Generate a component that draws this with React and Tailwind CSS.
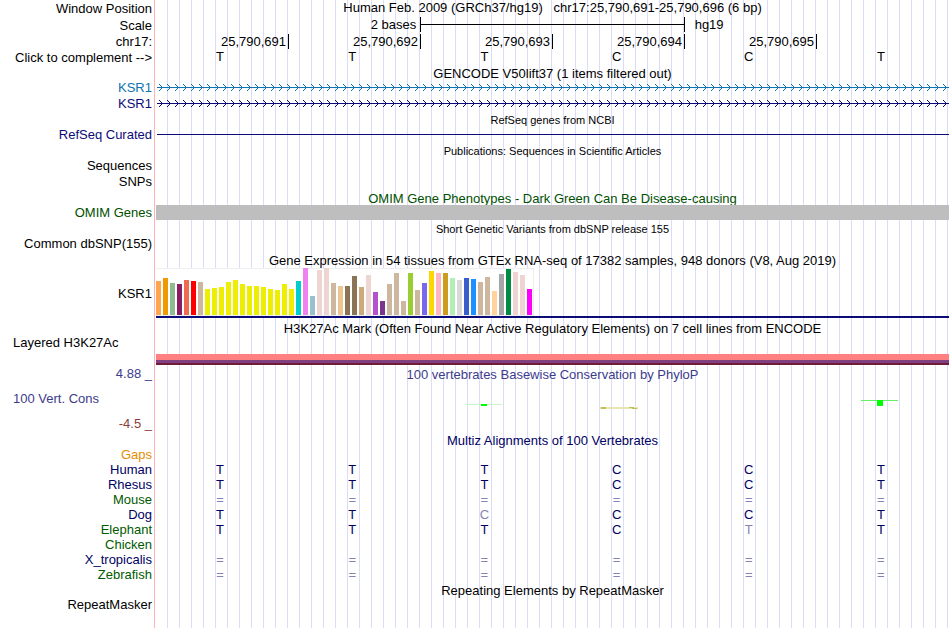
const BASES = ['T', 'T', 'T', 'C', 'C', 'T']
const POSITIONS = ['25,790,691', '25,790,692', '25,790,693', '25,790,694', '25,790,695']

// GTEx tissues: [bar height, color]
const TISSUES = [
  [34, '#ffa54f'], [37, '#ee9a00'], [32, '#8fbc8f'], [31, '#8b1c62'], [35, '#ee6a50'], [34, '#ff0000'],
  [33, '#cdb79e'], [26, '#eeee00'], [27, '#eeee00'], [28, '#eeee00'], [33, '#eeee00'], [35, '#eeee00'],
  [31, '#eeee00'], [29, '#eeee00'], [29, '#eeee00'], [28, '#eeee00'], [26, '#eeee00'], [25, '#eeee00'],
  [31, '#eeee00'], [26, '#eeee00'], [34, '#00cdcd'], [47, '#ee82ee'], [19, '#9ac0cd'], [45, '#eed5d2'],
  [47, '#eed5d2'], [32, '#cdb79e'], [29, '#eec591'], [29, '#8b7355'], [39, '#8b7355'], [28, '#cdaa7d'],
  [40, '#eed5d2'], [23, '#b452cd'], [14, '#7a378b'], [31, '#cdb79e'], [42, '#cdb79e'], [14, '#cdb79e'],
  [42, '#9acd32'], [25, '#cdb79e'], [32, '#7a67ee'], [44, '#ffd700'], [42, '#ffb6c1'], [42, '#cd9b1d'],
  [37, '#b4eeb4'], [35, '#d9d9d9'], [37, '#3a5fcd'], [36, '#1e90ff'], [33, '#cdb79e'], [38, '#cdb79e'],
  [24, '#ffd39b'], [41, '#a6a6a6'], [46, '#008b45'], [43, '#eed5d2'], [40, '#eed5d2'], [26, '#ff00ff'],
]

// lower case = base differs from the reference
const SPECIES = [
  { name: 'Human', color: 'text-[#000064]', row: 'TTTCCT' },
  { name: 'Rhesus', color: 'text-[#000064]', row: 'TTTCCT' },
  { name: 'Mouse', color: 'text-[#005a00]', row: '======' },
  { name: 'Dog', color: 'text-[#000064]', row: 'TTcCCT' },
  { name: 'Elephant', color: 'text-[#005a00]', row: 'TTTCtT' },
  { name: 'Chicken', color: 'text-[#005a00]', row: '' },
  { name: 'X_tropicalis', color: 'text-[#000064]', row: '======' },
  { name: 'Zebrafish', color: 'text-[#005a00]', row: '======' },
]

function Row({ label = '', color = 'text-black', height = 'h-4', align = 'items-start justify-end', children }) {
  return (
    <div className={`flex ${height}`}>
      <div className={`flex w-[154px] shrink-0 pr-0.5 pl-[13px] whitespace-pre ${align} ${color}`}>{label}</div>
      <div className="ml-0.5 min-w-0 flex-1">{children}</div>
    </div>
  )
}

function Title({ label, labelColor, color = 'text-black', size = 'text-[13px]', height = 'h-[15px]', children }) {
  return (
    <Row label={label} color={labelColor} height={height}>
      <h2 className={`text-center leading-[17px] whitespace-pre ${size} ${color}`}>{children}</h2>
    </Row>
  )
}

function Bases({ cells, color }) {
  return (
    <div className={`grid grid-cols-6 text-center ${color}`}>
      {cells.map((c, i) => (
        <span key={i} className={`pr-1 ${/[a-z=]/.test(c) ? 'text-[#8484b4]' : ''}`}>
          {c.toUpperCase()}
        </span>
      ))}
    </div>
  )
}

function GeneLine({ id, color }) {
  return (
    <svg className="block h-4 w-full" shapeRendering="crispEdges">
      <defs>
        <pattern id={id} width="8" height="16" patternUnits="userSpaceOnUse">
          <path
            d="M3 4h1v1h-1zM4 5h1v1h-1zM5 6h1v1h-1zM6 7h1v1h-1zM5 8h1v1h-1zM4 9h1v1h-1zM3 10h1v1h-1z"
            fill={color}
          />
        </pattern>
      </defs>
      <rect width="100%" height="16" fill={`url(#${id})`} />
      <rect x="1" y="7" width="100%" height="1" fill={color} />
    </svg>
  )
}

function Expression() {
  return (
    <div className="pt-px">
      <div className="flex h-12 w-[378px] items-end gap-0.5 border border-l-0 border-[#eeeeee] bg-white">
        {TISSUES.map(([h, color], i) => (
          <div key={i} className="w-[5px] shrink-0" style={{ height: h, background: color }} />
        ))}
      </div>
      <div className="h-0.5 bg-[#0c0c78]" />
    </div>
  )
}

function Conservation() {
  return (
    <div className="grid h-full grid-cols-6">
      <svg className="col-start-3 h-[35px] w-[46px] justify-self-center" shapeRendering="crispEdges">
        <path d="M2 23h37v1H2z" fill="#c8f5c8" />
        <path d="M18 23h6v2h-6z" fill="#00ff00" />
      </svg>
      <svg className="col-start-4 h-[35px] w-[46px] justify-self-center" shapeRendering="crispEdges">
        <path d="M4 26h38v2H4z" fill="#e6e6b4" />
        <path d="M5 26h5v2H5zM33 26h5v1h-5zM36 27h5v1h-5z" fill="#c0c050" />
      </svg>
      <svg className="col-start-6 h-[35px] w-[46px] justify-self-center" shapeRendering="crispEdges">
        <path d="M1 19h37v1H1z" fill="#64f064" />
        <path d="M17 19h6v6h-6z" fill="#00ff00" />
      </svg>
    </div>
  )
}

export default function App() {
  return (
    <div className="relative isolate min-h-screen overflow-hidden bg-white pr-px font-['Liberation_Sans',Arial,sans-serif] text-[13px] leading-[15px] text-black">
      {/* Guide lines behind all tracks */}
      <div className="absolute inset-y-0 right-0 left-[154px] -z-10 border-l border-[#ffb4b4] pl-px">
        <div className="h-full bg-[repeating-linear-gradient(to_right,transparent_0_11px,#dcdcf8_11px_12px)]" />
      </div>

      {/* Ruler */}
      <Row label="Window Position" height="h-[17px]" align="items-center justify-end">
        <h1 className="text-center whitespace-pre">
          {'Human Feb. 2009 (GRCh37/hg19)   chr17:25,790,691-25,790,696 (6 bp)'}
        </h1>
      </Row>
      <Row label="Scale" height="h-[17px]" align="items-center justify-end">
        <div className="grid grid-cols-6">
          <span className="col-span-2 pr-1 text-right">2 bases</span>
          <div className="col-span-2 flex items-center border-x border-black">
            <div className="h-px w-full bg-black" />
          </div>
          <span className="col-span-2 pl-2.5">hg19</span>
        </div>
      </Row>
      <Row label="chr17:" height="h-[15px]">
        <div className="ml-px grid grid-cols-6 text-right">
          {POSITIONS.map((p) => (
            <span key={p} className="border-r border-black pr-0.5">{p}</span>
          ))}
        </div>
      </Row>
      <Row label="Click to complement -->" align="items-center justify-end">
        <Bases cells={BASES} color="text-black" />
      </Row>

      {/* Genes */}
      <Title>GENCODE V50lift37 (1 items filtered out)</Title>
      <Row label="KSR1" color="text-[#1072ae]">
        <GeneLine id="arrows-blue" color="#1072ae" />
      </Row>
      <Row label="KSR1" color="text-[#0c0c78]">
        <GeneLine id="arrows-navy" color="#0c0c78" />
      </Row>
      <Title size="text-[11px]">RefSeq genes from NCBI</Title>
      <Row label="RefSeq Curated" color="text-[#0c0c78]">
        <div className="ml-px pt-[7px]">
          <div className="h-px bg-[#0c0c78]" />
        </div>
      </Row>

      {/* Publications and variants */}
      <Title size="text-[11px]">Publications: Sequences in Scientific Articles</Title>
      <Row label="Sequences" />
      <Row label="SNPs" />
      <Title color="text-[#005000]">OMIM Gene Phenotypes - Dark Green Can Be Disease-causing</Title>
      <Row label="OMIM Genes" color="text-[#005000]">
        <div className="h-[15px] bg-[#bebebe]" />
      </Row>
      <Title size="text-[11px]">Short Genetic Variants from dbSNP release 155</Title>
      <Row label="Common dbSNP(155)" />

      {/* Expression and regulation */}
      <Title>Gene Expression in 54 tissues from GTEx RNA-seq of 17382 samples, 948 donors (V8, Aug 2019)</Title>
      <Row label="KSR1" height="h-[53px]" align="items-center justify-end">
        <Expression />
      </Row>
      <Title>H3K27Ac Mark (Often Found Near Active Regulatory Elements) on 7 cell lines from ENCODE</Title>
      <Row label="Layered H3K27Ac" height="h-[31px]" align="items-start">
        <div className="pt-[19px]">
          <div className="h-1.5 bg-[#ff8080]" />
          <div className="h-[3px] bg-[#804080]" />
          <div className="h-0.5 bg-[#701c38]" />
        </div>
      </Row>

      {/* Conservation */}
      <Title label="4.88 _" labelColor="text-[#3c3c8c]" color="text-[#3c3c8c]">
        100 vertebrates Basewise Conservation by PhyloP
      </Title>
      <Row label="100 Vert. Cons" color="text-[#3c3c8c]" height="h-[35px]" align="items-center">
        <Conservation />
      </Row>
      <Row label="-4.5 _" color="text-[#8c3c3c]" />
      <Title color="text-[#000064]">Multiz Alignments of 100 Vertebrates</Title>
      <Row label="Gaps" color="text-[#e68c00]" height="h-[15px]" />
      {SPECIES.map((s) => (
        <Row key={s.name} label={s.name} color={s.color} height="h-[15px]">
          <Bases cells={[...s.row]} color="text-[#000064]" />
        </Row>
      ))}

      <Title>Repeating Elements by RepeatMasker</Title>
      <Row label="RepeatMasker" height="h-[15px]" />
    </div>
  )
}
